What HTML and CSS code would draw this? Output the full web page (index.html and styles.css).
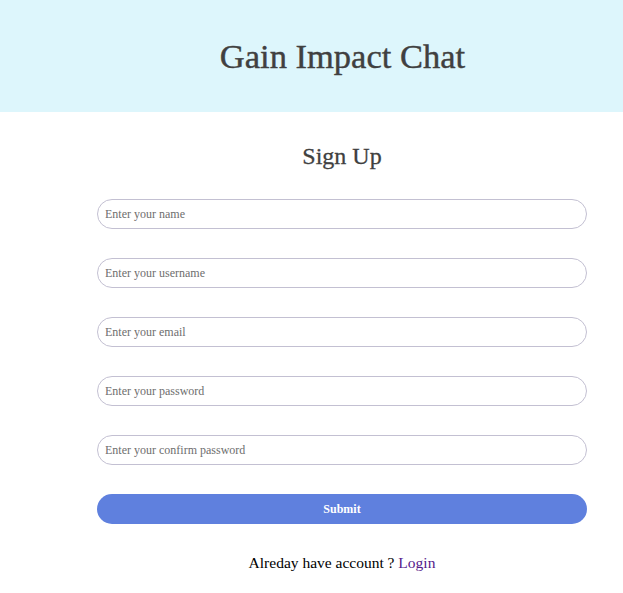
FILE: index.html
```html
<!DOCTYPE html>
<html>
<head>
<meta charset="utf-8">
<link rel="stylesheet" href="styles.css">
</head>
<body>
<header class="top">
  <h1 class="brand">Gain Impact Chat</h1>
</header>
<main class="wrap">
  <form class="form">
    <h2 class="title">Sign Up</h2>
    <input class="field" type="text" placeholder="Enter your name">
    <input class="field" type="text" placeholder="Enter your username">
    <input class="field" type="email" placeholder="Enter your email">
    <input class="field" type="password" placeholder="Enter your password">
    <input class="field" type="password" placeholder="Enter your confirm password">
    <button class="submit" type="button">Submit</button>
    <p class="alt">Alreday have account ? <a class="link" href="#">Login</a></p>
  </form>
</main>
</body>
</html>
```
FILE: styles.css
```css
* { box-sizing: border-box; }
body {
  margin: 0;
  font-family: "Liberation Serif", "DejaVu Serif", serif;
  background: #fff;
}
.top {
  height: 112px;
  background: #ddf6fc;
  display: flex;
  align-items: center;
  justify-content: center;
  padding-left: 62px;
}
.brand {
  margin: 0;
  font-size: 34.5px;
  font-weight: normal;
  color: #404040;
  -webkit-text-stroke: 0.4px #404040;
}
.wrap {
  padding-left: 97px;
}
.form {
  width: 490px;
  display: flex;
  flex-direction: column;
  gap: 29px;
}
.title {
  margin: 30px 0 0;
  text-align: center;
  font-size: 24px;
  font-weight: normal;
  color: #404040;
  -webkit-text-stroke: 0.3px #404040;
  line-height: 28px;
}
.field {
  height: 30px;
  border: 1px solid #c3c0d2;
  border-radius: 15px;
  padding: 0 7px;
  font-family: inherit;
  font-size: 12px;
  color: #333;
  outline: none;
}
.field::placeholder { color: #6e6e6e; }
.submit {
  height: 30px;
  border: none;
  border-radius: 15px;
  background: #5f80de;
  color: #fff;
  font-family: inherit;
  font-weight: bold;
  font-size: 12px;
}
.alt {
  margin: 1px 0 0;
  text-align: center;
  font-size: 15.5px;
  color: #000;
}
.link {
  color: #551a8b;
  text-decoration: none;
}
```
